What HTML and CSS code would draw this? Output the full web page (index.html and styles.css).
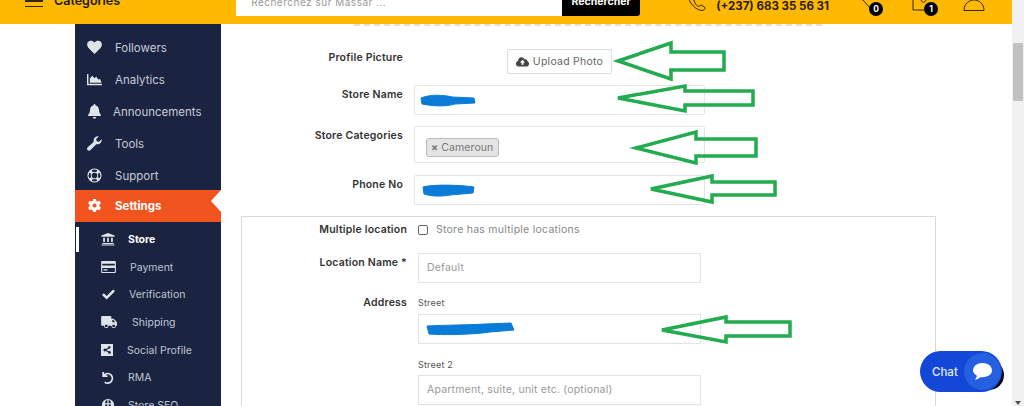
FILE: index.html
```html
<!DOCTYPE html>
<html lang="en">
<head>
<meta charset="utf-8">
<title>Store settings</title>
<link rel="stylesheet" href="styles.css">
</head>
<body>
<div class="window">
  <div class="page">
    <header class="topbar">
      <div class="burger"><span></span><span></span></div>
      <div class="cats">Categories</div>
      <div class="search">
        <div class="search-input">Recherchez sur Massar ...</div>
        <div class="search-btn">Rechercher</div>
      </div>
      <svg class="ic-phone" viewBox="0 0 19 11"><path d="M1 -3C3 4 9 10 15 10.5C17 10.5 18 9 18 7.5L14 5L11.5 6.5C9 5.5 7.5 3 7 0"/></svg>
      <div class="phone">(+237) 683 35 56 31</div>
      <div class="hicon cart"><svg viewBox="0 0 20 12"><path d="M0 -1L3 0L10 8"/></svg><b class="badge">0</b></div>
      <div class="hicon bag"><svg viewBox="0 0 24 12"><path d="M1 -2V10H16M9 0C10 3 13 3 14 0"/></svg><b class="badge">1</b></div>
      <svg class="ic-user" viewBox="0 0 24 12"><path d="M2 10.5C2 3 8 0 12 0C16 0 22 3 22 10.5Z"/></svg>
    </header>
    <div class="main">
      <nav class="side">
        <a class="item"><svg class="ico" viewBox="0 0 16 16"><path d="M8 15L1.6 8.4C-.6 6-.2 2.6 2.2 1.4 4.2.4 6.6 1 8 3 9.4 1 11.800.4 13.800 1.400 16.200 2.600 16.600 6 14.400 8.400Z"/></svg><span class="lbl l-a">Followers</span></a>
        <a class="item"><svg class="ico" viewBox="0 0 16 16"><path d="M0 2H1.500V12.500H16V14H0ZM3 11.500V7L5.500 4 8 6.500 10 5 12 8 14 7.500 15.500 11.500Z"/></svg><span class="lbl l-a">Analytics</span></a>
        <a class="item"><svg class="ico" viewBox="0 0 16 16"><path d="M8 0A1.300 1.300 0 0 1 9.200 1.500C11.500 2 12.800 4 12.800 6.200 12.800 9.500 14 10.500 14.800 11.500V12.800H1.200V11.500C2 10.500 3.200 9.500 3.200 6.200 3.200 4 4.500 2 6.800 1.500A1.300 1.300 0 0 1 8 0ZM6.200 13.800H9.800A1.800 1.800 0 0 1 6.200 13.800Z"/></svg><span class="lbl l-b">Announcements</span></a>
        <a class="item"><svg class="ico" viewBox="0 0 16 16"><path d="M15.500 3.500C16 5.500 15 8 12.500 8.700 11.500 9 10.600 8.900 10 8.700L3.800 15C2.800 16 1.200 15.900.5 15 -.2 14.200-.2 13 .8 12.100L7.200 6C7 5.300 7 4.300 7.300 3.500 8 1 10.500 0 12.500.5L9.800 3.200 10.300 5.700 12.800 6.200Z"/></svg><span class="lbl l-a">Tools</span></a>
        <a class="item"><svg class="ico" viewBox="0 0 16 16"><path fill-rule="evenodd" d="M8 .5A7.500 7.500 0 1 0 8 15.500 7.500 7.500 0 1 0 8 .500ZM8 5A3 3 0 1 1 8 11 3 3 0 1 1 8 5ZM5 2.500A6 6 0 0 1 11 2.500L9.800 4.400A4 4 0 0 0 6.200 4.400ZM2.500 5L4.400 6.200A4 4 0 0 0 4.400 9.800L2.500 11A6 6 0 0 1 2.500 5ZM13.500 5A6 6 0 0 1 13.500 11L11.600 9.800A4 4 0 0 0 11.600 6.200ZM6.200 11.600A4 4 0 0 0 9.800 11.600L11 13.500A6 6 0 0 1 5 13.500Z"/></svg><span class="lbl l-a">Support</span></a>
        <a class="item active"><svg class="ico" viewBox="0 0 16 16"><path fill-rule="evenodd" d="M6.500 0H9.500L10 2.200 11.200 2.800 13.300 2 14.800 4.600 13.200 6.100V7.900L14.800 9.400 13.300 12 11.200 11.200 10 11.900 9.500 14H6.500L6 11.900 4.800 11.200 2.700 12 1.200 9.400 2.800 7.900V6.100L1.200 4.600 2.700 2 4.800 2.800 6 2.200ZM8 4.800A2.200 2.200 0 1 0 8 9.200 2.200 2.200 0 1 0 8 4.800Z" transform="translate(0 1)"/></svg><span class="lbl l-s">Settings</span></a>
        <div class="sub">
          <a class="subitem current"><svg class="ico2" viewBox="0 0 16 16"><path d="M8 1L15.500 4V5.500H.5V4ZM2.500 6.500H4.500V11.500H2.500ZM7 6.500H9V11.500H7ZM11.500 6.500H13.500V11.500H11.500ZM1.500 12.500H14.500V13.800H1.500ZM.5 14.200H15.500V15.500H.5Z"/></svg><span class="lbl2 s1">Store</span></a>
          <a class="subitem"><svg class="ico3" viewBox="0 0 16 13"><path fill-rule="evenodd" d="M1 0H15A1 1 0 0 1 16 1V12A1 1 0 0 1 15 13H1A1 1 0 0 1 0 12V1A1 1 0 0 1 1 0ZM1.200 3V5H14.800V3ZM1.200 7.500V11.800H14.800V7.500ZM2.500 9H7V10.200H2.500Z"/></svg><span class="lbl2 s2">Payment</span></a>
          <a class="subitem"><svg class="ico3" viewBox="0 0 16 13"><path d="M1 6.500L3 4.500 6 7.500 13 .5 15 2.500 6 11.500Z"/></svg><span class="lbl2 s3">Verification</span></a>
          <a class="subitem"><svg class="ico4" viewBox="0 0 18 14"><path fill-rule="evenodd" d="M1 0H10A1 1 0 0 1 11 1V3H13.500L17 6.500V10.500H16A2.500 2.500 0 0 1 11 10.500H8A2.500 2.500 0 0 1 3 10.500H1A1 1 0 0 1 0 9.500V1A1 1 0 0 1 1 0ZM12 4.300V6.800H15.300L13 4.300ZM5.500 9.500A1.200 1.200 0 1 0 5.500 11.800 1.200 1.200 0 1 0 5.500 9.500ZM13.500 9.500A1.200 1.200 0 1 0 13.500 11.800 1.200 1.200 0 1 0 13.500 9.500Z"/></svg><span class="lbl2 s4">Shipping</span></a>
          <a class="subitem"><svg class="ico5" viewBox="0 0 12 12"><path fill-rule="evenodd" d="M0 0H12V12H0ZM8.500 2A1.400 1.400 0 0 0 7.100 3.700L4.800 5A1.400 1.400 0 1 0 4.800 7L7.100 8.300A1.400 1.400 0 1 0 7.700 7.300L5.400 6 7.700 4.700A1.400 1.400 0 1 0 8.500 2Z"/></svg><span class="lbl2 s5">Social Profile</span></a>
          <a class="subitem"><svg class="ico2" viewBox="0 0 16 16"><path d="M1.500 1H3.500V3.300A6.500 6.500 0 1 1 3.500 13.500L5 12A4.400 4.400 0 1 0 5 4.800H7.500V6.800H1.500Z"/></svg><span class="lbl2 s3">RMA</span></a>
          <a class="subitem"><svg class="ico2" viewBox="0 0 16 16"><path fill-rule="evenodd" d="M8 1A7 7 0 1 0 8 15 7 7 0 1 0 8 1ZM5.800 2.500H7.300V6H4.700C4.800 4.500 5.200 3.400 5.800 2.500ZM8.700 2.500H10.200C10.800 3.400 11.200 4.500 11.300 6H8.700ZM4.700 7.300H7.300V10H4.700ZM8.700 7.300H11.300V10H8.700Z"/></svg><span class="lbl2 s3">Store SEO</span></a>
        </div>
      </nav>
      <section class="content">
        <div class="dash"></div>
        <div class="row row-pic">
          <label class="lab">Profile Picture</label>
          <div class="upload">
            <svg class="cloud" viewBox="0 0 16 12"><path fill-rule="evenodd" d="M6.500 0C8.500 0 10 1.200 10.600 2.800 11 2.600 11.400 2.500 11.800 2.500 13.200 2.500 14 3.600 14 5 15.200 5.400 16 6.500 16 8 16 10 14.500 11.500 12.500 11.500H3.500C1.500 11.500 0 10 0 8 0 6.500 1 5 2.600 4.500 2.800 2 4.300 0 6.500 0ZM8 3.200L4.800 6.500H6.800V9.300H9.200V6.500H11.200Z"/></svg>
            <span>Upload Photo</span>
          </div>
        </div>
        <div class="row row-name">
          <label class="lab lab-top">Store Name</label>
          <div class="field"></div>
        </div>
        <div class="row row-cat">
          <label class="lab lab-top">Store Categories</label>
          <div class="field field-tall"><span class="tag"><i>×</i> Cameroun</span></div>
        </div>
        <div class="row row-phone">
          <label class="lab lab-top">Phone No</label>
          <div class="field"></div>
        </div>
        <div class="box">
          <div class="brow brow-check">
            <label class="blab">Multiple location</label>
            <span class="check"></span>
            <span class="check-text">Store has multiple locations</span>
          </div>
          <div class="brow brow-loc">
            <label class="blab blab-top">Location Name *</label>
            <div class="bfield ph">Default</div>
          </div>
          <div class="brow brow-addr">
            <label class="blab blab-addr">Address</label>
            <div class="stack">
              <div class="mini">Street</div>
              <div class="bfield"></div>
              <div class="mini mini-2">Street 2</div>
              <div class="bfield ph">Apartment, suite, unit etc. (optional)</div>
            </div>
          </div>
        </div>
      </section>
    </div>
  </div>
  <aside class="scrollbar">
    <div class="thumb"></div>
    <div class="arrow-down"></div>
  </aside>
</div>

<svg class="annot" viewBox="0 0 1024 406">
  <path class="scrib" d="M421 98C430 94 445 95 452 97L474 98 475 103 455 104C445 107 432 106 422 104Z"/>
  <path class="scrib" d="M423 187C435 184 460 185 474 187L473 193 450 195C440 197 430 196 424 194Z"/>
  <path class="scrib" d="M427 326C445 325 470 325 485 324L511 323 514 330 490 332C470 335 440 335 429 334Z"/>
  <path class="arr" d="M618 61L671 43V52H724V70H671V79Z"/>
  <path class="arr" d="M618 98L685 86V91H753V105H685V111Z"/>
  <path class="arr" d="M636 148L696 132V139H756V156H696V163Z"/>
  <path class="arr" d="M651 189L712 176V182H775V195H712V202Z"/>
  <path class="arr" d="M662 330L726 317V322H790V336H726V342Z"/>
</svg>

<div class="chat-shadow"></div>
<div class="chat">
  <span class="chat-text">Chat</span>
  <span class="chat-circle">
    <svg viewBox="0 0 20 18"><path d="M10 0C15.500 0 20 3 20 8 20 12 16 15 10 15 9 15 8 15 7.500 15 6 16.500 4 17.500 2 17.500 3.500 16 4 14.500 4 13.500 1.500 12 0 10 0 8 0 3 4.500 0 10 0Z"/></svg>
  </span>
</div>
</body>
</html>
```
FILE: styles.css
```css
* { box-sizing: border-box; }
html, body { margin: 0; height: 100%; overflow: hidden; background: #fff; }
body { font-family: "Inter", "Open Sans", sans-serif; color: #333; }

.window { display: flex; height: 406px; }
.page { flex: 0 0 1012px; display: flex; flex-direction: column; min-width: 0; }

/* scrollbar */
.scrollbar { flex: 0 0 12px; background: #f1f1f1; padding: 43px 1px 0; position: relative; }
.thumb { height: 58px; background: #c1c1c1; }
.arrow-down { position: absolute; left: 3px; bottom: 1px; border: 3px solid transparent; border-top: 4px solid #505050; border-bottom: 0; }

/* top bar */
.topbar { flex: 0 0 24px; height: 24px; background: #ffb900; display: flex; align-items: flex-start; overflow: hidden; }
.burger { width: 18px; margin-left: 25px; margin-top: 0; display: flex; flex-direction: column; gap: 4px; }
.burger span { display: block; height: 1.500px; background: #33240a; }
.cats { margin-left: 11px; margin-top: -7px; font-size: 12.500px; font-weight: 600; color: #221a08; line-height: 15px; }
.search { display: flex; margin-left: 116px; height: 16px; }
.search-input { width: 326px; background: #fff; padding-left: 15px; font-size: 10px; letter-spacing: .5px; color: #999; line-height: 4px; }
.search-btn { width: 78px; background: #000; color: #fff; font-size: 10.500px; font-weight: 700; text-align: center; line-height: 4px; border-radius: 0 0 3px 0; }
.topbar svg { fill: none; stroke: #33240a; stroke-width: 1; display: block; }
.ic-phone { width: 19px; height: 11px; margin-left: 47px; }
.phone { margin-left: 10px; margin-top: -1px; font-size: 11.500px; font-weight: 700; line-height: 15px; color: #2a1d06; width: 118px; white-space: nowrap; }
.hicon { position: relative; height: 16px; }
.hicon svg { height: 12px; }
.cart { margin-left: 26px; width: 23px; }
.cart svg { width: 20px; }
.bag { margin-left: 29px; width: 30px; }
.bag svg { width: 24px; }
.badge { position: absolute; top: 1.500px; width: 14px; height: 14px; border-radius: 50%; background: #000; color: #fff; font-size: 8.500px; font-weight: 700; text-align: center; line-height: 14px; }
.cart .badge { left: 9px; }
.bag .badge { left: 12px; }
.ic-user { width: 24px; height: 12px; margin-left: 20px; }

/* body */
.main { flex: 1; display: flex; padding-left: 75px; min-height: 0; overflow: hidden; }

/* sidebar */
.side { flex: 0 0 146px; background: #1a2340; height: 100%; padding-top: 7.500px; overflow: hidden; }
.item { display: flex; align-items: center; height: 32px; padding-left: 12px; color: #c6ccd8; font-size: 11.500px; }
.ico { width: 15px; height: 15px; fill: #dfe3ea; flex: none; }
.lbl { display: block; }
.l-a { margin-left: 13px; }
.l-b { margin-left: 11px; }
.l-s { margin-left: 13px; font-weight: 700; }
.item.active { background: #f1541f; color: #fff; position: relative; margin-top: -1.500px; height: 31.500px; }
.item.active .ico { fill: #fff; }
.item.active::after { content: ""; position: absolute; right: 0; top: 0; border-style: solid; border-width: 11px 10px 11px 0; border-color: transparent #fff transparent transparent; }

.sub { padding-top: 4px; }
.subitem { display: flex; align-items: center; height: 27.700px; padding-left: 26px; color: #bfc6d4; font-size: 10.500px; position: relative; }
.ico2 { width: 14px; height: 14px; fill: #dfe3ea; flex: none; }
.ico3 { width: 15px; height: 12px; fill: #dfe3ea; flex: none; }
.ico4 { width: 17px; height: 13px; fill: #dfe3ea; flex: none; }
.ico5 { width: 12px; height: 12px; fill: #dfe3ea; flex: none; }
.lbl2 { display: block; }
.s1 { margin-left: 13px; font-weight: 700; color: #fff; }
.s2 { margin-left: 14px; }
.s3 { margin-left: 13px; }
.s4 { margin-left: 14px; }
.s5 { margin-left: 14px; }
.subitem.current::before { content: ""; position: absolute; left: 1px; top: 1px; width: 3px; height: 25px; background: #fff; }

/* form */
.content { flex: 1; padding-left: 20px; min-width: 0; }
.dash { margin-left: 113px; width: 468px; height: 2px; border-top: 2px dashed #e3dfd2; }
.row { display: flex; column-gap: 11px; }
.lab { width: 162px; flex: none; text-align: right; font-size: 10.500px; font-weight: 600; color: #333; letter-spacing: .2px; }
.lab-top { padding-top: 3px; }
.row-pic { margin-top: 23px; height: 25px; align-items: flex-start; }
.row-pic .lab { padding-top: 2px; }
.upload { margin-left: 93px; width: 105px; height: 25px; border: 1px solid #ddd; border-radius: 2px; display: flex; align-items: center; justify-content: center; gap: 4px; font-size: 10.500px; color: #666; letter-spacing: .25px; }
.cloud { width: 13px; height: 10px; fill: #444; }
.row-name { margin-top: 11px; }
.row-cat { margin-top: 11px; }
.row-phone { margin-top: 12px; }
.field { width: 291px; height: 30px; border: 1px solid #e4e4e4; border-radius: 2px; }
.field-tall { height: 37px; padding: 8px 11px; }
.tag { display: inline-flex; align-items: center; gap: 3px; width: 73px; height: 19px; padding-left: 4px; background: #e4e4e4; border: 1px solid #bbb; border-radius: 3px; font-size: 10.500px; color: #777; letter-spacing: .1px; }
.tag i { font-style: normal; font-weight: 700; }

.box { margin-top: 11px; width: 695px; height: 260px; border: 1px solid #d8d8d8; }
.brow { display: flex; column-gap: 11px; }
.blab { width: 165px; flex: none; text-align: right; font-size: 10.500px; font-weight: 600; color: #333; letter-spacing: .2px; }
.blab-top { padding-top: 3px; }
.brow-check { height: 13px; margin-top: 6px; align-items: center; }
.check { width: 10px; height: 10px; border: 1px solid #666; border-radius: 2px; flex: none; }
.check-text { margin-left: -3px; font-size: 10.500px; color: #888; letter-spacing: .25px; }
.brow-loc { margin-top: 17px; }
.brow-addr { margin-top: 13px; }
.bfield { width: 283px; height: 30px; border: 1px solid #e4e4e4; font-size: 10.500px; line-height: 28px; padding-left: 8px; }
.ph { color: #999; letter-spacing: .2px; }
.stack { display: flex; flex-direction: column; }
.mini { font-size: 9px; color: #555; line-height: 12px; height: 12px; margin-top: 1px; margin-bottom: 5px; letter-spacing: .2px; }
.mini-2 { margin-top: 15px; margin-bottom: 4px; }

/* overlays */
.annot { position: fixed; left: 0; top: 0; width: 1024px; height: 406px; pointer-events: none; }
.arr { fill: none; stroke: #22ab4f; stroke-width: 3.500; stroke-linejoin: miter; }
.scrib { fill: #0a7bd8; stroke: #0a7bd8; stroke-width: 1; }

.chat-shadow { position: fixed; left: 975px; top: 360px; width: 29px; height: 30px; border-radius: 50%; background: #0a0a0a; }
.chat { position: fixed; left: 920px; top: 351px; width: 82px; height: 41px; border-radius: 21px; background: #1347d8; display: flex; align-items: center; }
.chat-text { margin-left: 12px; font-size: 11.500px; color: #e6ecff; font-weight: 500; }
.chat-circle { position: absolute; right: 1px; top: 2px; width: 37px; height: 37px; border-radius: 50%; background: #2560e0; display: flex; align-items: center; justify-content: center; }
.chat-circle svg { width: 19px; height: 17px; fill: #fff; }
```
